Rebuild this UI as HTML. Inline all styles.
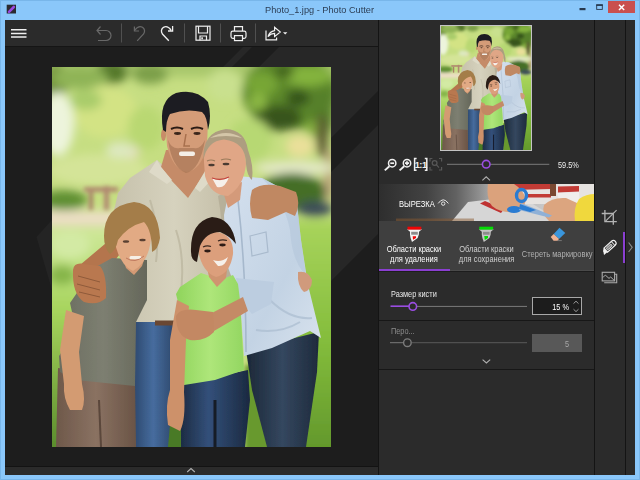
<!DOCTYPE html>
<html lang="ru">
<head>
<meta charset="utf-8">
<title>Photo_1.jpg - Photo Cutter</title>
<style>
html,body{margin:0;padding:0;}
body{width:640px;height:480px;overflow:hidden;background:#8ac7fa;position:relative;font-family:"Liberation Sans","DejaVu Sans",sans-serif;}
.abs{position:absolute;}
#title{left:0;top:0;width:640px;height:20px;background:#8ac7fa;}
#title .t{position:absolute;left:265px;top:4px;font-size:9.6px;line-height:12px;color:#2c3e55;white-space:nowrap;transform:scaleX(0.96);transform-origin:0 0;}
#close{left:608px;top:1px;width:27px;height:12px;background:#c9504f;}
#toolbar{left:5px;top:20px;width:630px;height:27px;background:#2b2b2b;border-bottom:1px solid #151515;box-sizing:border-box;}
#canvas{left:5px;top:47px;width:373px;height:419px;background:#1d1d1d;overflow:hidden;}
#botbar{left:5px;top:466px;width:373px;height:9px;background:#2b2b2b;border-top:1px solid #131313;box-sizing:border-box;}
#rpanel{left:378px;top:20px;width:216px;height:455px;background:#2b2b2b;border-left:1px solid #141414;box-sizing:border-box;}
#side{left:594px;top:20px;width:32px;height:455px;background:#2b2b2b;border-left:1px solid #141414;border-right:1px solid #141414;box-sizing:border-box;}
#side2{left:626px;top:20px;width:9px;height:455px;background:#2b2b2b;}
#tabs{left:379px;top:221px;width:215px;height:50.5px;background:#3f3f3f;border-bottom:1px solid #1d1d1d;box-sizing:border-box;}
.tab{position:absolute;top:23.4px;font-size:8.5px;line-height:10px;text-align:center;color:#fff;white-space:nowrap;transform:scaleX(0.88);transform-origin:50% 0;}
.lbl{position:absolute;font-size:8.3px;line-height:10px;color:#e8e8e8;white-space:nowrap;transform:scaleX(0.885);transform-origin:0 0;}
.lbr{transform-origin:100% 0;}
.sep{position:absolute;left:379px;width:215px;height:1px;background:#171717;}
</style>
</head>
<body>
<div class="abs" style="left:0;top:0;width:640px;height:480px;box-sizing:border-box;border:1px solid #78b6ea;"></div>
<div id="title" class="abs" style="background:none;"><span class="t">Photo_1.jpg - Photo Cutter</span></div>
<div id="close" class="abs"></div>
<div id="toolbar" class="abs"></div>
<div id="canvas" class="abs"><svg style="position:absolute;left:0;top:0;" width="373" height="419" viewBox="5 47 373 419">
<g fill="#272727">
<path d="M243 47H252L232 67H223Z"/>
<path d="M279 47H422L331 138V67H259Z"/>
<path d="M378 125V234L331 281V172Z"/>
<path d="M52 220L36.5 237L52 290Z" fill="#242424"/>
</g></svg></div>
<div id="botbar" class="abs"></div>
<div id="rpanel" class="abs"></div>
<div id="side" class="abs"></div>
<div id="side2" class="abs"></div>
<div id="tabs" class="abs">
  <div class="tab" style="left:4px;">Области краски<br>для удаления</div>
  <div class="tab" style="left:76px;color:#d0d0d0;">Области краски<br>для сохранения</div>
  <div class="tab" style="left:138px;top:28.4px;color:#b0b0b0;">Стереть маркировку</div>
</div>
<div class="abs" style="left:450px;top:269.5px;width:144px;height:1px;background:#4a4a4a;"></div>
<div class="abs" style="left:379px;top:268.5px;width:71px;height:2.3px;background:#8a3fd1;"></div>
<div class="abs" style="left:623px;top:232px;width:2px;height:31px;background:#8a3fd1;"></div>
<div class="lbl" style="left:390.5px;top:288.7px;">Размер кисти</div>
<div class="lbl" style="left:390.5px;top:325.7px;color:#8c8c8c;">Перо...</div>
<div class="sep" style="top:320px;"></div>
<div class="sep" style="top:369px;"></div>
<div class="abs" style="left:532px;top:297px;width:50px;height:18px;box-sizing:border-box;border:1px solid #a8a8a8;background:#1c1c1c;"></div>
<div class="lbl lbr" style="left:532px;top:301.5px;width:37px;text-align:right;color:#fff;">15 %</div>
<div class="abs" style="left:532px;top:334px;width:50px;height:17.5px;background:#585858;"></div>
<div class="lbl lbr" style="left:532px;top:338.5px;width:37.2px;text-align:right;color:#a8a8a8;">5</div>
<div class="lbl" style="left:558px;top:159.5px;color:#f0f0f0;">59.5%</div>
<div class="lbl" style="left:398.5px;top:198.5px;font-size:8.7px;color:#fff;z-index:5;transform:scaleX(0.875);">ВЫРЕЗКА</div>
<!--PHOTO-->
<svg width="0" height="0" style="position:absolute">
<defs>
<filter id="b6" x="-20%" y="-20%" width="140%" height="140%"><feGaussianBlur stdDeviation="5"/></filter>
<filter id="b3" x="-20%" y="-20%" width="140%" height="140%"><feGaussianBlur stdDeviation="2.2"/></filter>
<filter id="b1" x="-5%" y="-5%" width="110%" height="110%"><feGaussianBlur stdDeviation="0.7"/></filter>
<linearGradient id="gGrassR" x1="0" y1="0" x2="0" y2="1"><stop offset="0" stop-color="#a9d45c"/><stop offset="0.5" stop-color="#84bd3c"/><stop offset="1" stop-color="#5f942a"/></linearGradient>
<linearGradient id="gGrassL" x1="0" y1="0" x2="0" y2="1"><stop offset="0" stop-color="#cfe89a"/><stop offset="0.35" stop-color="#a6d45c"/><stop offset="1" stop-color="#4f8226"/></linearGradient>
<linearGradient id="gJeansM" x1="0" y1="0" x2="1" y2="0"><stop offset="0" stop-color="#2c476c"/><stop offset="0.45" stop-color="#466c9e"/><stop offset="1" stop-color="#294162"/></linearGradient>
<linearGradient id="gJeansW" x1="0" y1="0" x2="1" y2="0"><stop offset="0" stop-color="#1c2838"/><stop offset="0.5" stop-color="#34475f"/><stop offset="1" stop-color="#1e2a3c"/></linearGradient>
<linearGradient id="gJeansG" x1="0" y1="0" x2="1" y2="0"><stop offset="0" stop-color="#1d2c44"/><stop offset="0.4" stop-color="#33507a"/><stop offset="1" stop-color="#1b2940"/></linearGradient>
<linearGradient id="gPants" x1="0" y1="0" x2="1" y2="0"><stop offset="0" stop-color="#6e584a"/><stop offset="0.5" stop-color="#8a7262"/><stop offset="1" stop-color="#6a5446"/></linearGradient>
<linearGradient id="gPolo" x1="0" y1="0" x2="1" y2="0"><stop offset="0" stop-color="#c6c1ab"/><stop offset="0.5" stop-color="#d6d2be"/><stop offset="1" stop-color="#c2bca5"/></linearGradient>
<linearGradient id="gWsh" x1="0" y1="0" x2="1" y2="1"><stop offset="0" stop-color="#d4e0ee"/><stop offset="0.6" stop-color="#c3d3e4"/><stop offset="1" stop-color="#d9e3ee"/></linearGradient>
<linearGradient id="gTee" x1="0" y1="0" x2="1" y2="0"><stop offset="0" stop-color="#6a6c5f"/><stop offset="0.5" stop-color="#7d7f71"/><stop offset="1" stop-color="#65675a"/></linearGradient>
<linearGradient id="gGtee" x1="0" y1="0" x2="1" y2="0"><stop offset="0" stop-color="#8fd45c"/><stop offset="0.5" stop-color="#aee67a"/><stop offset="1" stop-color="#93d661"/></linearGradient>
<clipPath id="pc"><rect x="52" y="67" width="279" height="380"/></clipPath>
<symbol id="photo" viewBox="52 67 279 380" preserveAspectRatio="none">
<g clip-path="url(#pc)">
<rect x="52" y="67" width="279" height="380" fill="#c6de82"/>
<!-- bokeh background -->
<g filter="url(#b6)">
<rect x="40" y="55" width="300" height="22" fill="#a9c76c"/>
<ellipse cx="56" cy="82" rx="12" ry="18" fill="#6f9038"/>
<ellipse cx="112" cy="72" rx="16" ry="12" fill="#55782a"/>
<ellipse cx="80" cy="78" rx="28" ry="11" fill="#8fb456"/>
<ellipse cx="150" cy="74" rx="18" ry="10" fill="#7c9f48"/>
<ellipse cx="58" cy="124" rx="16" ry="32" fill="#edf4dc"/>
<ellipse cx="105" cy="112" rx="32" ry="26" fill="#d3e384"/>
<ellipse cx="86" cy="100" rx="16" ry="10" fill="#a9cc6a"/>
<ellipse cx="124" cy="152" rx="15" ry="8" fill="#e8dcc4"/>
<ellipse cx="146" cy="128" rx="18" ry="22" fill="#b9d872"/>
<ellipse cx="98" cy="170" rx="50" ry="16" fill="#d4e498"/>
<ellipse cx="120" cy="150" rx="14" ry="8" fill="#dde8c0"/>
<ellipse cx="225" cy="85" rx="18" ry="16" fill="#c9e08e"/>
<ellipse cx="290" cy="92" rx="48" ry="38" fill="#5c872c"/>
<ellipse cx="262" cy="84" rx="16" ry="12" fill="#77a636"/>
<ellipse cx="308" cy="76" rx="24" ry="10" fill="#84b43c"/>
<ellipse cx="322" cy="112" rx="12" ry="26" fill="#56802a"/>
<ellipse cx="278" cy="118" rx="24" ry="13" fill="#38551c"/>
<ellipse cx="258" cy="102" rx="9" ry="9" fill="#8cb844"/>
<ellipse cx="298" cy="98" rx="12" ry="9" fill="#36541b"/>
<ellipse cx="284" cy="72" rx="10" ry="6" fill="#3f601f"/>
<ellipse cx="312" cy="128" rx="7" ry="7" fill="#86b040"/>
<ellipse cx="250" cy="140" rx="22" ry="22" fill="#b7d873"/>
<ellipse cx="300" cy="146" rx="14" ry="11" fill="#eadf9a"/>
<ellipse cx="322" cy="136" rx="6" ry="22" fill="#5c5a30"/>
<ellipse cx="329" cy="175" rx="4" ry="26" fill="#b8947a"/>
<ellipse cx="295" cy="168" rx="40" ry="7" fill="#e3e8c6"/>
<ellipse cx="292" cy="192" rx="34" ry="19" fill="#446e28"/>
<ellipse cx="315" cy="209" rx="18" ry="8" fill="#3e4e58"/>
<rect x="255" y="220" width="90" height="240" fill="url(#gGrassR)"/>
<ellipse cx="64" cy="200" rx="24" ry="10" fill="#5f8f32"/>
<rect x="40" y="211" width="90" height="15" fill="#ecdec6"/>
<rect x="40" y="228" width="90" height="240" fill="url(#gGrassL)"/>
<ellipse cx="70" cy="245" rx="20" ry="14" fill="#d3eaa4"/>
<ellipse cx="62" cy="275" rx="14" ry="10" fill="#86b548"/>
</g>
<g filter="url(#b3)">
<rect x="84" y="187" width="34" height="5" fill="#b08a70"/>
<rect x="89" y="192" width="4" height="18" fill="#a88068"/>
<rect x="104" y="186" width="5" height="24" fill="#b08870"/>
<rect x="245" y="365" width="32" height="90" fill="#68992e"/>
<rect x="163" y="415" width="22" height="40" fill="#4a7a28"/>
</g>
<g filter="url(#b1)">
<!-- woman jeans -->
<path d="M246 350 L319 332 L317 372 L306 447 L267 447 L252 390 Z" fill="url(#gJeansW)"/>
<!-- man jeans -->
<path d="M133 318 L178 318 L174 380 L168 447 L134 447 Z" fill="url(#gJeansM)"/>
<!-- boy trousers -->
<path d="M58 368 L135 380 L136 447 L56 447 Z" fill="url(#gPants)"/>
<path d="M99 400 L101 447" stroke="#5a463a" stroke-width="2" fill="none"/>
<!-- girl jeans -->
<path d="M181 384 L248 370 L250 400 L245 447 L181 447 Z" fill="url(#gJeansG)"/>
<path d="M215 400 L215 447" stroke="#121a28" stroke-width="3" fill="none"/>
<!-- man polo shirt -->
<path d="M157 160 L130 178 L118 193 L113 215 L112 242 L124 246 L132 322 L180 322 L232 300 L236 210 L228 178 L205 160 L186 186 Z" fill="url(#gPolo)"/>
<!-- man neck -->
<path d="M166 150 L206 150 L208 168 L188 198 L171 180 L161 167 Z" fill="#c58b67"/>
<path d="M157 160 L149 172 L167 184 L172 180 L161 167 Z" fill="#dedac8"/>
<path d="M208 166 L214 177 L200 192 L195 188 Z" fill="#dedac8"/>
<path d="M218 196 Q226 240 222 304 L232 300 L236 210 L230 190 Z" fill="#a9a38c" opacity="0.55"/>
<path d="M150 200 Q160 230 156 262 M176 230 Q186 260 180 300" stroke="#b9b39c" stroke-width="2" fill="none" opacity="0.7"/>
<!-- man arm left (on boy) -->
<path d="M112 238 L124 248 L104 276 L76 284 L74 270 Z" fill="#b4754e"/>
<!-- woman shirt -->
<path d="M236 176 L262 178 L296 196 L301 240 L308 285 L321 338 L310 331 L272 348 L244 356 L240 300 L226 262 L224 215 L228 196 Z" fill="url(#gWsh)"/>
<path d="M238 200 Q246 270 246 352" stroke="#a6b8cc" stroke-width="1.6" fill="none"/>
<path d="M250 236 L266 232 L268 252 L252 256 Z" fill="none" stroke="#a9bacd" stroke-width="1.2"/>
<path d="M262 178 L296 196 L301 240 L306 275 Q292 262 290 230 Q284 200 262 178Z" fill="#b4c6da" opacity="0.6"/>
<path d="M270 300 Q290 320 312 318 M256 330 Q280 334 300 322" stroke="#aebfd2" stroke-width="2" fill="none" opacity="0.8"/>
<!-- woman neck -->
<path d="M222 188 L242 182 L240 200 L228 208 Z" fill="#d49a7a"/>
<!-- woman sleeve around girl -->
<path d="M236 278 L274 282 L271 304 L252 314 L240 300 Z" fill="#bccde0"/>
<!-- man's arm over woman -->
<path d="M252 190 Q262 182 280 186 L296 192 Q301 204 295 216 L286 212 L268 220 L252 218 Q248 204 252 190 Z" fill="#c08862"/>
<!-- woman's right hand -->
<path d="M298 272 Q308 270 312 280 Q312 290 304 292 Q297 286 298 272 Z" fill="#d09a7c"/>
<!-- boy tee -->
<path d="M94 268 L112 258 L147 260 L147 300 L136 322 L135 386 L76 380 L60 372 L59 356 L76 330 L70 303 Z" fill="url(#gTee)"/>
<path d="M124 262 L144 260 L142 266 L134 275 L126 268 Z" fill="#d49a74"/>
<!-- boy arm -->
<path d="M66 310 L84 316 L79 352 L82 384 Q86 400 82 410 L70 410 Q63 398 64 384 L60 350 Z" fill="#d39b72"/>
<!-- man hand on boy -->
<path d="M73 270 Q74 262 84 264 L100 266 Q107 274 106 298 Q98 306 84 302 Q72 294 73 270 Z" fill="#b9784f"/>
<path d="M78 276 L100 282 M77 284 L100 290 M79 292 L100 297" stroke="#8f5a3a" stroke-width="1" fill="none"/>
<rect x="155" y="320.5" width="21" height="5" fill="#6a4630"/>
<!-- girl tee -->
<path d="M180 287 L201 273 L210 276 L217 286 L225 278 L233 275 L238 284 L240 300 L244 370 L215 380 L178 386 L180 310 L176 294 Z" fill="url(#gGtee)"/>
<path d="M206 262 L228 262 L226 278 L217 287 L209 277 Z" fill="#cf9470"/>
<!-- girl arm -->
<path d="M177 300 L189 306 L186 340 L184 392 Q186 420 180 431 L168 425 Q165 405 170 390 L170 340 Z" fill="#cd916a"/>
<!-- woman's forearm + hand on girl -->
<path d="M243 297 L248 311 L214 331 L206 316 Z" fill="#c48a66"/>
<path d="M176 316 Q180 308 196 310 L213 312 L214 332 Q204 342 190 340 Q176 336 176 316 Z" fill="#c38863"/>
<!-- man head -->
<path d="M165 118 Q164 100 186 98 Q208 100 208 120 L207 146 Q201 170 187 172 Q173 170 167 146 Z" fill="#d49c78"/>
<ellipse cx="163.5" cy="135" rx="2.5" ry="6" fill="#c88c68"/>
<path d="M163 130 Q158 100 176 93 Q196 88 208 102 Q212 116 208 130 Q207 116 202 112 Q186 108 170 114 Q166 120 166 132 Z" fill="#1d1c20"/>
<path d="M168 140 Q172 168 186 173 Q200 170 205 140 Q200 150 194 148 L180 148 Q172 150 168 140Z" fill="#a07050" opacity="0.6"/>
<rect x="179" y="151.5" width="16" height="4.5" rx="2" fill="#f4efe8"/>
<path d="M171 129 Q177 126 183 129 M191 129 Q197 126 203 129" stroke="#2a1c14" stroke-width="2" fill="none"/>
<ellipse cx="177.5" cy="133.5" rx="3.5" ry="1.4" fill="#3a261c"/><ellipse cx="197" cy="133.5" rx="3.5" ry="1.4" fill="#3a261c"/>
<path d="M186 134 L184 146 L190 146" stroke="#a8704e" stroke-width="1.5" fill="none"/>
<!-- woman head -->
<path d="M204 162 Q203 139 224 138 Q246 140 246 164 Q244 186 228 196 Q210 195 205 176 Z" fill="#e0a686"/>
<path d="M203.5 160 Q202 132 226 129 Q245 130 248 150 Q254 166 252 180 Q247 176 246 164 Q246 142 224 139.5 Q207 141 203.5 160 Z" fill="#ad9d80"/>
<path d="M210 138 Q226 128 242 138 Q226 134 210 138Z" fill="#d4c6a8"/>
<path d="M212 178 Q221 183 229 177 Q225 189 217 187 Z" fill="#f6f0ea"/>
<ellipse cx="211.5" cy="165" rx="3.2" ry="1.3" fill="#4a3a30"/><ellipse cx="226" cy="164" rx="3.4" ry="1.3" fill="#4a3a30"/>
<path d="M207 161 Q211 159 215 161 M221 160 Q226 158 231 160" stroke="#9a7a5a" stroke-width="1.2" fill="none"/>
<path d="M212 178 Q221 181 229 177" stroke="#c0403a" stroke-width="1.2" fill="none"/>
<!-- boy head -->
<path d="M113 232 Q115 214 134 214 Q152 216 151 238 Q149 262 133 271 Q117 264 113 232 Z" fill="#e2aa84"/>
<path d="M104 236 Q104 206 134 202 Q158 204 160 238 Q158 250 152 252 Q152 230 144 222 Q128 226 118 240 Q116 250 110 254 Q104 248 104 236 Z" fill="#a47d48"/>
<rect x="129.5" y="256" width="12" height="3.2" rx="1.5" fill="#f6efe6"/>
<ellipse cx="126" cy="241.5" rx="3.2" ry="1.3" fill="#5a4030"/><ellipse cx="142.5" cy="240" rx="3.2" ry="1.3" fill="#5a4030"/>
<path d="M126 258 Q135 264 144 256" stroke="#c07a60" stroke-width="1" fill="none"/>
<!-- girl head -->
<path d="M198 250 Q198 232 216 232 Q234 234 233 254 Q230 274 216 277 Q202 272 198 250 Z" fill="#dc9f7c"/>
<path d="M191 252 Q190 222 212 217 Q232 218 236 244 Q230 236 220 232 Q206 232 200 246 Q198 256 197 262 Q191 260 191 252 Z" fill="#2c1f18"/>
<path d="M213 260 Q221 263 228 257 Q225 267 218 266 Z" fill="#f6f0ea"/>
<ellipse cx="207.5" cy="251" rx="3.2" ry="1.4" fill="#2e1e18"/><ellipse cx="222.5" cy="245" rx="3.2" ry="1.4" fill="#2e1e18"/>
<path d="M203 247 Q207 245 211 246.5 M218 241 Q222 239 227 240.5" stroke="#3a2820" stroke-width="1.3" fill="none"/>
</g>
</g>
</symbol>
</defs>
</svg>
<svg class="abs" style="left:52px;top:67px;" width="279" height="380"><use href="#photo" x="0" y="0" width="279" height="380"/></svg>
<div class="abs" style="left:440px;top:25px;width:92px;height:126px;background:#c4c4c4;"></div>
<svg class="abs" style="left:441px;top:26px;" width="90" height="124"><use href="#photo" x="0" y="0" width="90" height="124"/></svg>
<!--/PHOTO-->
<!--OVL-->
<svg class="abs" style="left:0;top:0;z-index:3;" width="640" height="480" viewBox="0 0 640 480">
<defs>
<linearGradient id="bnr" x1="0" y1="0" x2="1" y2="0"><stop offset="0" stop-color="#2e2e2e"/><stop offset="0.22" stop-color="#424242"/><stop offset="0.36" stop-color="#626262"/><stop offset="0.46" stop-color="#8c8c8c"/><stop offset="0.56" stop-color="#b8b8b8"/><stop offset="1" stop-color="#d8d8d8"/></linearGradient>
<clipPath id="bc"><rect x="379" y="184" width="215" height="37"/></clipPath>
</defs>
<!-- app icon -->
<rect x="6.7" y="4.7" width="9.3" height="8.8" fill="#2a2a30"/>
<path d="M9 11.8 L13.8 7" stroke="#9a48e0" stroke-width="2.6" stroke-linecap="round"/>
<!-- window buttons -->
<rect x="579.5" y="8" width="6" height="2.2" fill="#26384e"/>
<rect x="596.7" y="5" width="5.6" height="4.4" fill="none" stroke="#26384e" stroke-width="0.9"/>
<rect x="596.2" y="4.3" width="6.6" height="1.6" fill="#26384e"/>
<path d="M619 4.8 L624.2 10 M624.2 4.8 L619 10" stroke="#fff" stroke-width="1.5"/>
<!-- hamburger -->
<g stroke="#f0f0f0" stroke-width="1.5"><path d="M11 29.7H26.5M11 33.4H26.5M11 37.1H26.5"/></g>
<!-- toolbar separators -->
<g stroke="#505050" stroke-width="1"><path d="M121.5 23.5V42.5M184.5 23.5V42.5M220.5 23.5V42.5M255.5 23.5V42.5"/></g>
<!-- undo all (disabled) -->
<path d="M100.5 26.5L97 30.5L100.5 34.5M97 30.5H106A5 5 0 0 1 106 40.5H98" stroke="#686868" stroke-width="1.2" fill="none"/>
<!-- undo (disabled) -->
<path d="M137.2 40.8L143.6 34Q146 30 142.5 27.3Q138.5 25.2 135 30M134.4 26.4V31H139" stroke="#686868" stroke-width="1.2" fill="none"/>
<!-- redo -->
<path d="M168.8 40.8L162.4 34Q160 30 163.5 27.3Q167.5 25.2 171 30M172.6 26V31H168" stroke="#f0f0f0" stroke-width="1.3" fill="none"/>
<!-- save -->
<g stroke="#f0f0f0" stroke-width="1.2" fill="none"><rect x="196" y="26.2" width="14" height="14"/><path d="M198.5 26.2V33H207.5V26.2M200 40.2V36H206.5V40.2"/></g>
<rect x="201.3" y="37.3" width="1.6" height="2" fill="#f0f0f0"/>
<!-- print -->
<g stroke="#f0f0f0" stroke-width="1.2" fill="none"><path d="M234.5 31V26.6H242.5V31"/><rect x="231" y="31.2" width="15" height="7.2" rx="1.8"/><rect x="234.5" y="35.6" width="8" height="5" fill="#2b2b2b"/></g>
<!-- share -->
<g stroke="#f0f0f0" stroke-width="1.2" fill="none"><path d="M266 30.6V39.8H276.6V37.4"/><path d="M268 36.6Q269.5 31.5 274.6 30.6V27.2L280.3 32L274.6 36.6V33.4Q271 33.3 268 36.6Z"/></g>
<path d="M283 32.2H287.4L285.2 34.6Z" fill="#f0f0f0"/>
<!-- zoom icons -->
<g stroke="#f0f0f0" stroke-width="1.5" fill="none">
<circle cx="392.2" cy="163.2" r="3.7"/><path d="M389.4 166.2L384.8 170.4" stroke-width="1.9"/><path d="M390.3 163.2H394.1" stroke-width="1.7"/>
<circle cx="407" cy="163.2" r="3.7"/><path d="M404.2 166.2L399.6 170.4" stroke-width="1.9"/><path d="M405 163.2H409M407 161.2V165.2" stroke-width="1.7"/>
<path d="M416.6 158.4H414.6V170.2H416.6M424.8 158.4H426.8V170.2H424.8"/>
</g>
<text x="420.7" y="167.6" font-size="9.4" font-weight="bold" fill="#f0f0f0" text-anchor="middle" font-family="Liberation Sans, sans-serif" letter-spacing="-0.5">1:1</text>
<g stroke="#585858" stroke-width="1.2" fill="none"><path d="M432.4 158.5H430V161.5M430 167V170H432.4M439 158.5H441.6V161.5M441.6 167V170H439"/><circle cx="434.6" cy="163" r="2.4"/><path d="M436.3 164.7L439 167.6"/></g>
<!-- zoom slider -->
<rect x="447" y="163.8" width="102.3" height="1" fill="#7a7a7a"/>
<circle cx="486.2" cy="164.2" r="3.8" fill="#2b2b2b" stroke="#9a4de2" stroke-width="1.6"/>
<path d="M482.4 180.3L486.2 176.8L490 180.3" stroke="#b0b0b0" stroke-width="1.1" fill="none"/>
<!-- banner -->
<g clip-path="url(#bc)">
<rect x="379" y="184" width="215" height="37" fill="url(#bnr)"/>
<g filter="url(#b1)">
<path d="M452 221L468 202L520 196L560 221Z" fill="#d6d6d6"/>
<rect x="508" y="184" width="90" height="20" fill="#e6e3e0"/>
<path d="M480 203.5L485 201L504 209L501 213Z" fill="#bf3232"/>
<path d="M510 184H551V189L511 190Z M526 194H551V197.6H526Z M558 186.5L579 186V191.5L558 192.5Z" fill="#c23a36"/>
<rect x="550" y="184" width="6" height="12" fill="#7a4a32"/>
<path d="M557 193L579 192L580 203L560 204Z" fill="#f0eeec"/>
<path d="M488 184L514 184Q524 190 526 200Q524 210 514 212Q500 213 492 206Q486 198 488 184Z" fill="#dba27c"/>
<path d="M544 205Q552 197 566 198L577 203L576 221H549Q541 214 544 205Z" fill="#dca57f"/>
<ellipse cx="521.5" cy="195.5" rx="5" ry="6" fill="none" stroke="#2a7bd2" stroke-width="3.4"/>
<ellipse cx="514" cy="209.5" rx="7" ry="3.6" fill="#2a7bd2"/>
<path d="M521 203L552 215.5L549 217.5L519 210Z" fill="#8fb0d6"/>
<path d="M520 204L536 210L530 212L519 209Z" fill="#2a7bd2"/>
<path d="M579 199Q586 194 595 194V222H575Q573 208 579 199Z" fill="#f0d83c"/>
</g>
<rect x="396" y="218.5" width="78" height="2.5" fill="#8a5a30" opacity="0.5"/>
</g>
<!-- eye icon -->
<g stroke="#e8e8e8" stroke-width="1" fill="none"><path d="M438.2 203.4Q443.2 196.2 448.4 203.4"/><circle cx="443.2" cy="203.6" r="1.7"/></g>
<!-- tab icons: red marker -->
<g>
<path d="M407 229.3H422L419 231.8L418.8 234.8L417.6 238L412 241.9L410.6 238L410 234.8L410 231.8Z" fill="#f4f4f4"/>
<rect x="407.5" y="226.7" width="13.8" height="2.9" fill="#f00404"/>
<rect x="411.2" y="231.8" width="6.6" height="2.9" fill="#8c8c8c"/>
<path d="M412.7 236.2H416V238L413 239.7Z" fill="#f00404"/>
</g>
<g transform="translate(71.8 0)">
<path d="M407 229.3H422L419 231.8L418.8 234.8L417.6 238L412 241.9L410.6 238L410 234.8L410 231.8Z" fill="#c4c4c4"/>
<rect x="407.5" y="226.7" width="13.8" height="2.9" fill="#04dc04"/>
<rect x="411.2" y="231.8" width="6.6" height="2.9" fill="#8c8c8c"/>
<path d="M412.4 236H416.2V238L413 239.9Z" fill="#04dc04"/>
</g>
<!-- eraser -->
<path d="M559.5 227.7L565.3 233L559 239L553.7 234Z" fill="#3a96dc"/>
<path d="M553.7 234L559 239L557.5 240.8H553.6L550.7 237Z" fill="#f0b292"/>
<path d="M557.5 240.6H561.8" stroke="#9a9a9a" stroke-width="0.6"/>
<!-- sidebar icons -->
<g stroke="#b4b4b4" stroke-width="1.3" fill="none">
<path d="M604.9 210V221.6H616.8M601.7 213.5H613.3V224.8"/><path d="M605.6 221.2L616.6 210.2" stroke-width="1.1"/>
</g>
<g stroke="#ababab" stroke-width="1.1" fill="none">
<rect x="602.2" y="272.3" width="12.4" height="8.6"/><path d="M604.2 282.8H616.7V274.2H614.8"/><path d="M602.8 277.6L605.3 275.1L609 278.4L610.7 277L614 280.2" stroke-width="1"/>
</g>
<!-- marker (active) -->
<g transform="translate(609.2 247) rotate(-42) scale(0.93)">
<path d="M-5 -2.9H6Q8.9 -2.9 8.9 0Q8.9 2.9 6 2.9H-5Z" fill="none" stroke="#f2f2f2" stroke-width="1.25"/>
<path d="M-5 -2.9L-7.6 -1.2L-9.8 2.6L-5 2.9Z" fill="#f2f2f2"/>
<path d="M-5.2 -2.2L-7.6 0" stroke="#f2f2f2" stroke-width="1.2"/>
<rect x="-3.6" y="-1.3" width="7.2" height="2.6" rx="1.2" fill="#8a8a8a" stroke="#f2f2f2" stroke-width="0.8"/>
<path d="M5.6 -2.9V2.9" stroke="#f2f2f2" stroke-width="1"/>
</g>
<path d="M628.6 242.5L632.2 247.3L628.6 252" stroke="#8a8a8a" stroke-width="1.1" fill="none"/>
<!-- brush slider -->
<rect x="390.5" y="305.4" width="18.5" height="1.6" fill="#9a4de2"/>
<rect x="417" y="305.9" width="110" height="1" fill="#7a7a7a"/>
<circle cx="412.8" cy="306.4" r="3.8" fill="#2b2b2b" stroke="#9a4de2" stroke-width="1.6"/>
<path d="M573.5 303.6L576 301.2L578.5 303.6M573.5 309.2L576 311.6L578.5 309.2" stroke="#a8a8a8" stroke-width="0.9" fill="none"/>
<!-- feather slider -->
<rect x="390" y="342.2" width="13" height="1" fill="#7a7a7a"/>
<rect x="412" y="342.2" width="115" height="1" fill="#5a5a5a"/>
<circle cx="407.4" cy="342.7" r="3.8" fill="#2b2b2b" stroke="#7c7c7c" stroke-width="1.4"/>
<path d="M482.6 359.6L486.4 363L490.2 359.6" stroke="#b0b0b0" stroke-width="1.1" fill="none"/>
<!-- bottom chevron -->
<path d="M187.2 472L191 468.6L194.8 472" stroke="#b0b0b0" stroke-width="1.1" fill="none"/>
</svg>
<!--/OVL-->
</body>
</html>
